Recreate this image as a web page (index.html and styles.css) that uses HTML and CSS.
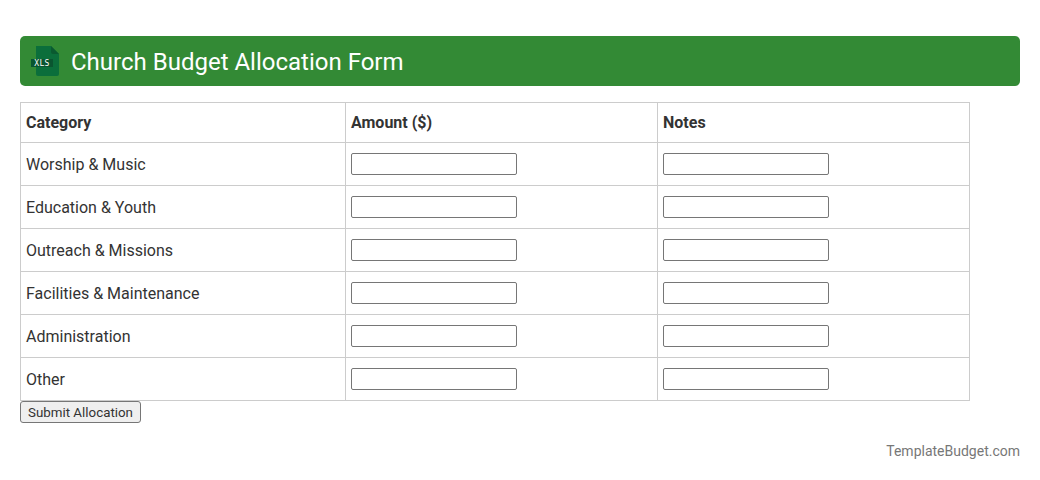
FILE: index.html
```html
<!DOCTYPE html>
<html lang="en">
<head>
    <meta charset="UTF-8">
    <meta name="viewport" content="width=device-width, initial-scale=1.0">
    <title>Church Budget Allocation Form</title>
    <link rel="stylesheet" href="styles.css">
</head>
<body>

<header class="title-bar">
    <svg class="xls-icon" width="30" height="32" viewBox="0 0 30 32" aria-hidden="true">
        <path d="M6 1H21L29 9V29a2 2 0 0 1-2 2H8a2 2 0 0 1-2-2Z" fill="#0b6e3b"/>
        <path d="M21 1L29 9H23a2 2 0 0 1-2-2Z" fill="#0a5a30"/>
        <rect x="1" y="14" width="22" height="8" fill="#0a5530"/>
        <text x="12" y="21" class="xls-text" text-anchor="middle">XLS</text>
    </svg>
    <h1>Church Budget Allocation Form</h1>
</header>

<form>
    <table class="budget-table">
        <tr>
            <th class="col-cat">Category</th>
            <th class="col-field">Amount ($)</th>
            <th class="col-field">Notes</th>
        </tr>
        <tr>
            <td>Worship &amp; Music</td>
            <td><input type="text"></td>
            <td><input type="text"></td>
        </tr>
        <tr>
            <td>Education &amp; Youth</td>
            <td><input type="text"></td>
            <td><input type="text"></td>
        </tr>
        <tr>
            <td>Outreach &amp; Missions</td>
            <td><input type="text"></td>
            <td><input type="text"></td>
        </tr>
        <tr>
            <td>Facilities &amp; Maintenance</td>
            <td><input type="text"></td>
            <td><input type="text"></td>
        </tr>
        <tr>
            <td>Administration</td>
            <td><input type="text"></td>
            <td><input type="text"></td>
        </tr>
        <tr>
            <td>Other</td>
            <td><input type="text"></td>
            <td><input type="text"></td>
        </tr>
    </table>
    <button type="button" class="submit-btn">Submit Allocation</button>
</form>

<footer class="site-credit">TemplateBudget.com</footer>

</body>
</html>
```
FILE: styles.css
```css
/* Reset */
* {
    box-sizing: border-box;
}
body {
    margin: 0;
    padding: 36px 20px 0;
    font-family: Roboto, sans-serif;
    font-size: 16px;
    color: #333;
    background: #fff;
}
/* Title bar */
.title-bar {
    display: flex;
    align-items: center;
    gap: 11px;
    height: 50px;
    padding: 0 10px;
    background: #338a35;
    border-radius: 5px;
    margin-bottom: 16px;
}
.title-bar h1 {
    margin: 0;
    padding-top: 2px;
    font-size: 24px;
    font-weight: 400;
    color: #fff;
}
.xls-icon {
    flex: none;
}
.xls-text {
    font-family: "DejaVu Sans Mono", monospace;
    font-size: 8px;
    letter-spacing: 0.4px;
    fill: #fff;
}
/* Table */
.budget-table {
    width: 950px;
    border-collapse: collapse;
    table-layout: fixed;
}
.budget-table th,
.budget-table td {
    border: 1px solid #ccc;
    padding: 10px 5px;
    text-align: left;
    line-height: 19px;
}
.budget-table th {
    font-weight: 700;
}
.col-cat {
    width: 325px;
}
.col-field {
    width: 312px;
}
.budget-table input {
    display: block;
    width: 166px;
    height: 22px;
    padding: 1px 2px;
    border: 1px solid #767676;
    border-radius: 2px;
    background: #fff;
}
/* Button */
.submit-btn {
    display: block;
    height: 22px;
    width: 121px;
    padding: 0;
    font-family: Roboto, sans-serif;
    font-size: 13.33px;
    color: #333;
    background: #efefef;
    border: 1px solid #767676;
    border-radius: 3px;
}
/* Footer */
.site-credit {
    margin-top: 19px;
    text-align: right;
    font-size: 14px;
    line-height: 18px;
    color: #777;
}
```
